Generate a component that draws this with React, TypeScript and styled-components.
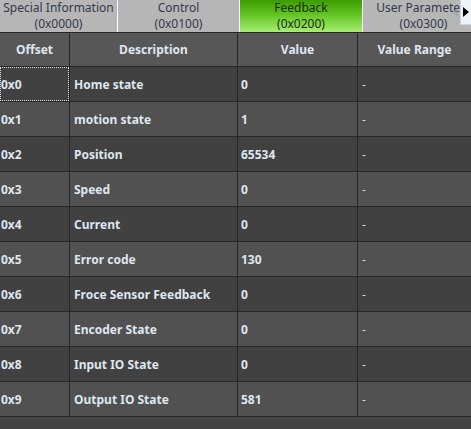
import React from "react";
import styled, { createGlobalStyle, css } from "styled-components";

const Global = createGlobalStyle`
  html, body { margin: 0; padding: 0; background: #434343; }
  * { box-sizing: border-box; }
`;

const Page = styled.div`
  width: 471px;
  height: 429px;
  background: #434343;
  overflow: hidden;
  font-family: "Noto Sans", "Open Sans", "Liberation Sans", sans-serif;
`;

const TabBar = styled.div`
  position: relative;
  display: flex;
  gap: 1px;
  height: 32px;
  background: #ffffff;
  overflow: hidden;
`;

const Tab = styled.div<{ $active?: boolean; $w: number }>`
  flex: 0 0 ${(p) => p.$w}px;
  display: flex;
  flex-direction: column;
  align-items: center;
  justify-content: center;
  font-size: 12px;
  color: #33394a;
  white-space: nowrap;
  overflow: hidden;
  background: #b6b6b6;
  ${(p) =>
    p.$active &&
    css`
      background: linear-gradient(to bottom, #3c9c00 0%, #62c422 45%, #a6ef74 100%);
      color: #1f2a1a;
    `}
`;

const TabLine = styled.span`
  display: block;
  height: 16px;
  line-height: 16px;
`;

const Scroller = styled.div`
  position: absolute;
  top: 0;
  right: 0;
  display: flex;
  align-items: flex-start;
`;

const ScrollLeft = styled.div`
  width: 8px;
  height: 24px;
  display: flex;
  align-items: center;
  justify-content: center;
  opacity: 0.55;
`;

const ScrollRight = styled.div`
  width: 11px;
  height: 25px;
  display: flex;
  align-items: center;
  justify-content: center;
  background: #eef3f8;
  border-left: 1px solid #c8d4e2;
  border-bottom: 1px solid #c8d4e2;
`;

const Grid = styled.div`
  display: grid;
  grid-template-columns: 69px 167px 119px 1fr;
  grid-auto-rows: 34px;
  grid-template-rows: 33px;
  gap: 1px;
  padding: 1px 0;
  background: #262626;
`;

const HeadCell = styled.div`
  display: flex;
  align-items: center;
  justify-content: center;
  background: #575757;
  color: #dfe6ef;
  font-size: 12px;
  font-weight: 700;
`;

const Cell = styled.div<{ $alt: boolean; $pad: number; $focus?: boolean }>`
  position: relative;
  display: flex;
  align-items: center;
  padding-left: ${(p) => p.$pad}px;
  background: ${(p) => (p.$alt ? "#515151" : "#414141")};
  color: #dfe6ef;
  font-size: 12px;
  font-weight: 700;
  white-space: nowrap;
  overflow: hidden;
  ${(p) =>
    p.$focus &&
    css`
      &::after {
        content: "";
        position: absolute;
        inset: 0 0 0 0;
        border: 1px dotted #e0e0e0;
      }
    `}
`;

const Dash = styled.span`
  font-weight: 400;
  color: #d8d8d8;
`;

const rows: [string, string, string][] = [
  ["0x0", "Home state", "0"],
  ["0x1", "motion state", "1"],
  ["0x2", "Position", "65534"],
  ["0x3", "Speed", "0"],
  ["0x4", "Current", "0"],
  ["0x5", "Error code", "130"],
  ["0x6", "Froce Sensor Feedback", "0"],
  ["0x7", "Encoder State", "0"],
  ["0x8", "Input IO State", "0"],
  ["0x9", "Output IO State", "581"],
];

const tabs = [
  { t: "Special Information", c: "(0x0000)", w: 117 },
  { t: "Control", c: "(0x0100)", w: 121 },
  { t: "Feedback", c: "(0x0200)", w: 122, active: true },
  { t: "User Parameters", c: "(0x0300)", w: 121 },
];

export default function App() {
  return (
    <Page>
      <Global />
      <TabBar>
        {tabs.map((tb) => (
          <Tab key={tb.t} $w={tb.w} $active={tb.active}>
            <TabLine>{tb.t}</TabLine>
            <TabLine>{tb.c}</TabLine>
          </Tab>
        ))}
        <Scroller>
          <ScrollLeft>
            <svg width="6" height="10" viewBox="0 0 6 10">
              <path d="M5 0 L0 5 L5 10 Z" fill="#8a96a6" />
            </svg>
          </ScrollLeft>
          <ScrollRight>
            <svg width="6" height="10" viewBox="0 0 6 10">
              <path d="M0 0 L6 5 L0 10 Z" fill="#000" />
            </svg>
          </ScrollRight>
        </Scroller>
      </TabBar>
      <Grid>
        <HeadCell>Offset</HeadCell>
        <HeadCell>Description</HeadCell>
        <HeadCell>Value</HeadCell>
        <HeadCell>Value Range</HeadCell>
        {rows.map((r, i) => {
          const alt = i % 2 === 1;
          return (
            <React.Fragment key={r[0]}>
              <Cell $alt={alt} $pad={1} $focus={i === 0}>{r[0]}</Cell>
              <Cell $alt={alt} $pad={4}>{r[1]}</Cell>
              <Cell $alt={alt} $pad={3}>{r[2]}</Cell>
              <Cell $alt={alt} $pad={4}><Dash>-</Dash></Cell>
            </React.Fragment>
          );
        })}
      </Grid>
    </Page>
  );
}
